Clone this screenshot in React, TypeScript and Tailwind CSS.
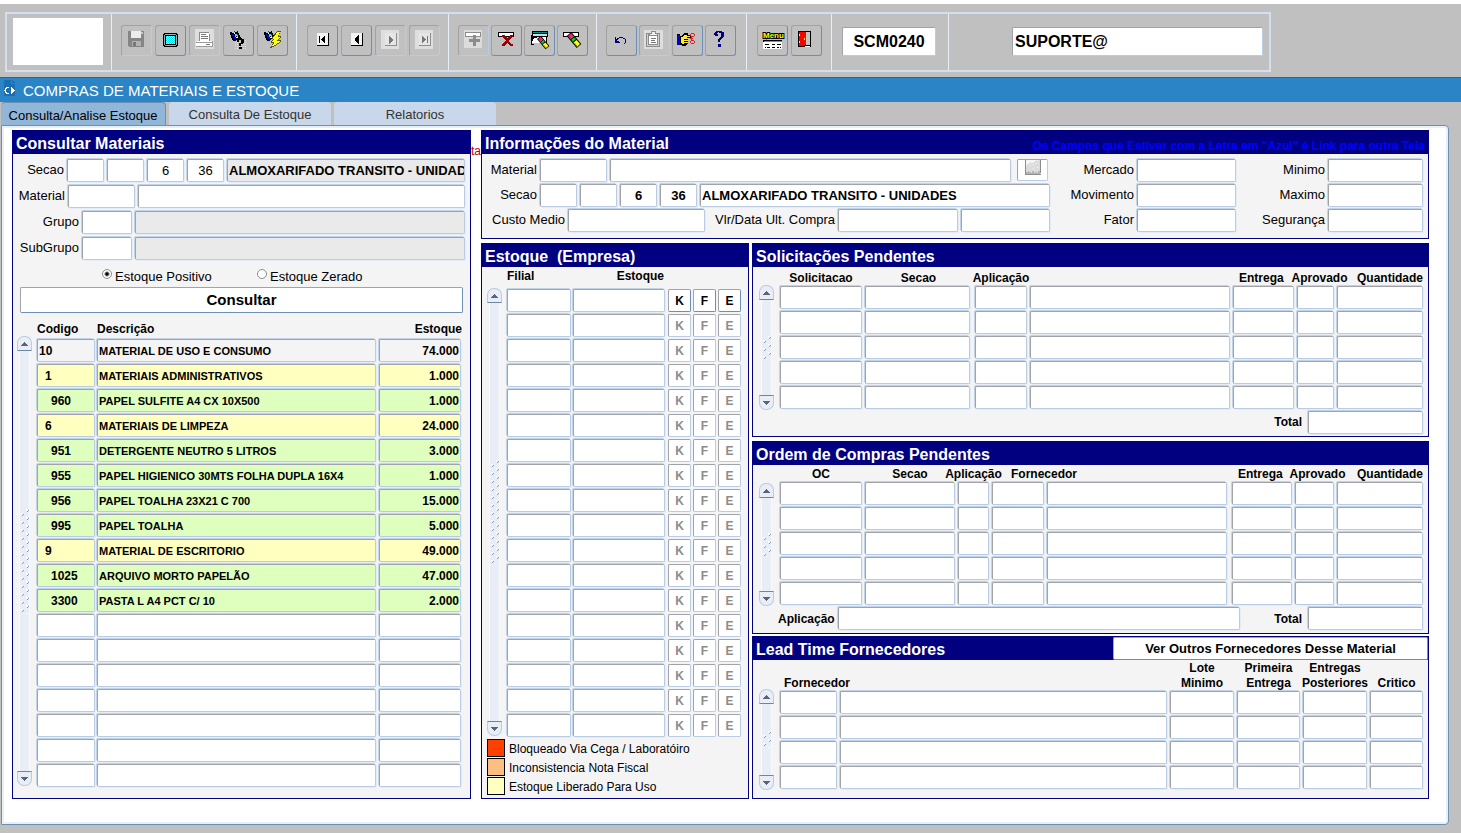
import React, { useState } from 'react';

interface Column {
  label: string;
  width?: string;
  head?: string;
  cell?: string;
}

interface StockRow {
  code: string;
  description: string;
  stock: string;
  level: 0 | 1 | 2;
}

const FIELD =
  'block h-[23px] min-w-0 rounded-[2px] border border-[#b8cce4] border-t-[#a0a4aa] border-l-[#a0a4aa] px-px text-black shadow-[-1px_-1px_0_#c3d3e8,1px_1px_0_#e4ecf6] outline-none';

const TOOL_BUTTON =
  'flex h-[31px] w-[31px] shrink-0 items-center justify-center rounded-[3px] border border-t-[#a2a2a2] border-l-[#a2a2a2]';

const STOCK_ROWS: StockRow[] = [
  { code: '10', description: 'MATERIAL DE USO E CONSUMO', stock: '74.000', level: 0 },
  { code: '1', description: 'MATERIAIS ADMINISTRATIVOS', stock: '1.000', level: 1 },
  { code: '960', description: 'PAPEL SULFITE A4 CX 10X500', stock: '1.000', level: 2 },
  { code: '6', description: 'MATERIAIS DE LIMPEZA', stock: '24.000', level: 1 },
  { code: '951', description: 'DETERGENTE NEUTRO 5 LITROS', stock: '3.000', level: 2 },
  { code: '955', description: 'PAPEL HIGIENICO 30MTS FOLHA DUPLA 16X4', stock: '1.000', level: 2 },
  { code: '956', description: 'PAPEL TOALHA 23X21 C 700', stock: '15.000', level: 2 },
  { code: '995', description: 'PAPEL TOALHA', stock: '5.000', level: 2 },
  { code: '9', description: 'MATERIAL DE ESCRITORIO', stock: '49.000', level: 1 },
  { code: '1025', description: 'ARQUIVO MORTO PAPELÃO', stock: '47.000', level: 2 },
  { code: '3300', description: 'PASTA L A4 PCT C/ 10', stock: '2.000', level: 2 },
];

const LEVEL_BG = ['bg-[#f4f4f4]', 'bg-[#ffffbf]', 'bg-[#dfffbf]'];
const LEVEL_INDENT = ['pl-px', 'pl-[7px]', 'pl-[13px]'];

const SOLICITACOES: Column[] = [
  { label: 'Solicitacao', width: 'w-[85px]', head: 'justify-center' },
  { label: 'Secao', width: 'w-[110px]', head: 'justify-center', cell: 'pr-[5px]' },
  { label: 'Aplicação', width: 'w-[55px]', head: 'justify-center' },
  { label: '' },
  { label: 'Entrega', width: 'w-[64px]', head: 'justify-start pl-[6px]' },
  { label: 'Aprovado', width: 'w-[40px]', head: 'justify-center pl-2' },
  { label: 'Quantidade', width: 'w-[89px]', head: 'justify-end' },
];

const ORDENS: Column[] = [
  { label: 'OC', width: 'w-[85px]', head: 'justify-center' },
  { label: 'Secao', width: 'w-[93px]', head: 'justify-center' },
  { label: 'Aplicação', width: 'w-[34px]', head: 'justify-center' },
  { label: 'Fornecedor', width: 'w-[55px]', head: 'justify-center pl-13' },
  { label: '', cell: 'pr-[5px]' },
  { label: 'Entrega', width: 'w-[63px]', head: 'justify-start pl-[6px]' },
  { label: 'Aprovado', width: 'w-[42px]', head: 'justify-center pl-[6px]' },
  { label: 'Quantidade', width: 'w-[89px]', head: 'justify-end' },
];

const LEAD_TIME: Column[] = [
  { label: 'Fornecedor', width: 'w-[60px]', head: 'justify-start pl-1' },
  { label: '' },
  { label: 'Lote\nMinimo', width: 'w-[67px]', head: 'justify-center' },
  { label: 'Primeira\nEntrega', width: 'w-[66px]', head: 'justify-center' },
  { label: 'Entregas\nPosteriores', width: 'w-[67px]', head: 'justify-center' },
  { label: 'Critico', width: 'w-[56px]', head: 'justify-center' },
];

interface FieldProps extends React.InputHTMLAttributes<HTMLInputElement> {
  name: string;
}

const Field: React.FC<FieldProps> = ({ name, className = '', ...rest }) => (
  <input aria-label={name} id={name} className={`${FIELD} ${className}`} {...rest} />
);

const Label: React.FC<{ htmlFor: string; className: string; children: React.ReactNode }> = ({ htmlFor, className, children }) => (
  <label htmlFor={htmlFor} className={`shrink-0 pr-[3px] text-right text-[13px] leading-[21px] whitespace-nowrap ${className}`}>
    {children}
  </label>
);

const Scroller: React.FC<{ className: string }> = ({ className }) => (
  <div className={`flex w-[15px] shrink-0 flex-col ${className}`}>
    <button aria-label="Subir" className="flex h-[15px] shrink-0 items-center justify-center rounded-t-[7px] border border-[#b8cce4] border-b-[#6b87a8] bg-[#e9edf5]">
      <svg width="7" height="4" viewBox="0 0 7 4" shapeRendering="crispEdges"><path d="M3 0h1v1h1v1h1v1h1v1H0V3h1V2h1V1h1z" fill="#5b6478" /></svg>
    </button>
    <div className="mx-[2px] flex flex-1 flex-col items-center border-x border-[#f9fafc] bg-[#e9edf5]">
      <div className="grow-3 basis-0" />
      <svg className="min-h-0 w-[8px] grow-2 basis-0" shapeRendering="crispEdges">
        <defs>
          <pattern id="grip" width="8" height="8" patternUnits="userSpaceOnUse">
            <path d="M5 0h2v1H6v1H5zM0 4h2v1H1v1H0z" fill="#fff" />
            <path d="M7 1v1H6v1h1V2h1V1zM2 5v1H1v1h1V6h1V5z" fill="#7f9abf" />
          </pattern>
        </defs>
        <rect width="8" height="100%" fill="url(#grip)" />
      </svg>
      <div className="grow-3 basis-0" />
    </div>
    <button aria-label="Descer" className="flex h-[15px] shrink-0 items-center justify-center rounded-b-[7px] border border-[#b8cce4] border-t-[#6b87a8] bg-[#e9edf5]">
      <svg width="7" height="4" viewBox="0 0 7 4" shapeRendering="crispEdges"><path d="M0 0h7v1H6v1H5v1H4v1H3V3H2V2H1V1H0z" fill="#5b6478" /></svg>
    </button>
  </div>
);

const PanelTitle: React.FC<{ children: React.ReactNode }> = ({ children }) => (
  <h2 className="h-[23px] bg-[#000080] pl-[3px] text-[16px] leading-[26px] font-bold whitespace-pre text-white">{children}</h2>
);

const EntryTable: React.FC<{ id: string; columns: Column[]; rows: number; headHeight: string }> = ({ id, columns, rows, headHeight }) => (
  <table className="w-full table-fixed border-collapse">
    <thead>
      <tr>
        {columns.map((col, i) => (
          <th key={i} className={`p-0 align-bottom ${headHeight} ${col.width ?? ''}`}>
            <div className={`flex pr-[3px] text-center text-[12px] leading-[15px] font-bold whitespace-pre ${col.head ?? ''}`}>
              <span>{col.label}</span>
            </div>
          </th>
        ))}
      </tr>
    </thead>
    <tbody>
      {Array.from({ length: rows }, (_, r) => (
        <tr key={r}>
          {columns.map((col, i) => (
            <td key={i} className={`p-0 pb-[2px] ${col.cell ?? 'pr-[3px]'}`}>
              <Field name={`${id}-${r}-${i}`} className="w-full bg-white text-[12px]" />
            </td>
          ))}
        </tr>
      ))}
    </tbody>
  </table>
);

/* Toolbar drawings, all on a 21 by 21 pixel board */

const Icon: React.FC<{ children: React.ReactNode }> = ({ children }) => (
  <svg width="21" height="21" viewBox="0 0 21 21" shapeRendering="crispEdges" className="shrink-0 overflow-visible">
    {children}
  </svg>
);

// one pixel on, one pixel off; odd rows are shifted or left empty
const dots = (x: number, y: number, w: number, h: number, sparse = false) => {
  let d = '';
  for (let row = 0; row < h; row++) {
    if (sparse && row % 2) continue;
    for (let col = row % 2; col < w; col += 2) d += `M${x + col} ${y + row}h1v1h-1z`;
  }
  return d;
};

const Flashlight = () => (
  <>
    <path d="M2 2h2v1h3V2h2V1h1v2h1v2h1v2h1v1h-2v1H9v1H8v1H5v-1H4V8H3V5H2z" fill="#000" />
    <path d="M4 4h2v1h1v2h1v2H6V8H5V6H4z" fill="#0000e0" />
    <path d="M7 4h2v1h1v2H9V6H8v1H7z" fill="#00ffff" />
    <path d="M8 7h2v1H8zM6 3h1v1H6z" fill="#fff" />
    <path d="M6 1h1v1H6z" fill="#e00" />
  </>
);

const Eraser = () => (
  <g shapeRendering="auto">
    <path d="M7 4L17 16" stroke="#000" strokeWidth="6" />
    <path d="M7.500 4.600L9.600 7.100" stroke="#ff1493" strokeWidth="4" />
    <path d="M9.600 7.100L10.200 7.800" stroke="#ff9a20" strokeWidth="4" />
    <path d="M10.700 8.400L12.400 10.500" stroke="#00d020" strokeWidth="4" />
    <path d="M13 11.200L16.500 15.400" stroke="#ffff20" strokeWidth="4" />
    <path d="M12.300 12.800L15.300 16.400" stroke="#8a8a00" strokeWidth="1" />
  </g>
);

const IconSave = () => (
  <Icon>
    <path d="M2 1h16v16H3v-1H2z" fill="#858585" />
    <path d="M5 1h10v7H5z" fill="#ececec" />
    <path d="M15 2h2v2h-2z" fill="#c9c9c9" />
    <path d="M6 11h9v5H6z" fill="#b2b2b2" />
    <path d="M7 12h3v4H7z" fill="#777" />
  </Icon>
);

const IconScreen = () => (
  <Icon>
    <path d="M4 3h13v1h1v12h-1v1H4v-1H3V4h1z" fill="#000" />
    <path d="M5 4h11v1h1v10h-1v1H5v-1H4V5h1z" fill="#a8a8a8" />
    <path d="M5 5h11v10H5z" fill="#000" />
    <path d="M6 6h9v8H6z" fill="#fff" />
    <path d={dots(6, 6, 9, 8)} fill="#00e5ee" />
  </Icon>
);

const IconPrint = () => (
  <Icon>
    <path d="M1 -1h19v20H1z" fill="#dedede" />
    <path d="M5 2h10v2h1v7H5z" fill="#fff" />
    <path d="M5 2h10v1H5zM5 2h1v9H5zM15 4h1v7h-1z" fill="#8a8a8a" />
    <path d="M7 4h5v1H7zM7 6h7v1H7zM7 8h7v1H7z" fill="#777" />
    <path d="M3 11h15v1h1v5H2v-5h1z" fill="#fff" />
    <path d="M2 12h16v1H2zM2 16h17v1H2zM18 11h1v6h-1z" fill="#9a9a9a" />
    <path d="M12 14h4v1h-4z" fill="#777" />
  </Icon>
);

const IconEnterQuery = () => (
  <Icon>
    <Flashlight />
    <path d={dots(7, 12, 12, 8, true)} fill="#ffff00" />
    <path d={dots(15, 10, 4, 2, true)} fill="#ffff00" />
    <path d="M10 8h4v1h2v4h-1v1h-2v2h-2v-3h2v-3h-2v2H9V9h1zM11 17h3v2h-3z" fill="#000" />
  </Icon>
);

const IconExecuteQuery = () => (
  <Icon>
    <Flashlight />
    <path d="M15 1h4v1h-1v2h-1v2h2v2h-1v1h-1v1h2v2h-1v1h-1v1h-2v1h-1v1h-2v1h-2v1H8v-1h1v-1h1v-2h1v-1H9v-2h1v-1h1V9h-1V7h1V6h1V4h1V3h1V2h1z" fill="#55551a" />
    <path d="M15 2h3v1h-1v2h-1v2h2v1h-1v1h-1v1h-1v1h3v1h-1v1h-2v1h-1v1h-2v1h-2v-1h1v-1h1v-2h-2v-1h1v-1h1V9h-1V7h1V6h1V5h1V3h1z" fill="#ffff10" />
  </Icon>
);

const IconNav: React.FC<{ shape: string; off?: boolean }> = ({ shape, off }) => (
  <Icon>
    {off && <path d="M1 0h18v19H1z" fill="#dedede" />}
    <path d="M5 3h12v13H5z" fill={off ? '#8e8e8e' : '#000'} />
    <path d="M5 3h11v12H5z" fill={off ? '#e6e6e6' : '#f3f3f3'} />
    <path d={shape} fill={off ? '#777' : '#000'} />
  </Icon>
);

const IconInsert = () => (
  <Icon>
    <path d="M1 0h18v18H1z" fill="#dcdcdc" />
    <path d="M2 2h16v5H2z" fill="#8c8c8c" />
    <path d="M3 3h14v3H3z" fill="#fff" />
    <path d="M10 5h3v4h4v3h-4v4h-3v-4H6V9h4z" fill="#8c8c8c" />
  </Icon>
);

const IconDelete = () => (
  <Icon>
    <path d="M2 2h16v5H2z" fill="#000" />
    <path d="M3 3h14v3H3z" fill="#fff" />
    <path d="M6 5h3v1h1v1h1v1h1V7h1V6h1V5h3v2h-1v1h-1v1h-1v1h-1v2h1v1h1v1h2v2h-3v-1h-1v-1h-1v-1h-1v1h-1v1H9v1H6v-2h1v-1h1v-1h1v-1h1v-1H9V9H8V8H7V7H6z" fill="#990000" />
  </Icon>
);

const IconClearBlock = () => (
  <Icon>
    <path d="M3 1h16v6H3zM2 5h1v9h2v1H2zM17 6h1v7h-1z" fill="#000" />
    <path d="M4 2h14v1H4z" fill="#008a8a" />
    <path d="M4 4h14v2H4z" fill="#d8d8d8" />
    <path d="M3 7h14v6H3z" fill="#fff" />
    <path d="M3 7h5v1H5v1H4v2H3z" fill="#000" />
    <g transform="translate(4 4) scale(.85)">
      <Eraser />
    </g>
  </Icon>
);

const IconClearRecord = () => (
  <Icon>
    <path d="M1 2h16v5H1z" fill="#000" />
    <path d="M2 3h14v3H2z" fill="#fff" />
    <Eraser />
  </Icon>
);

const IconUndo = () => (
  <Icon>
    <path d="M4 7h1v2h1V8h2V7h4v1h2v1h1v4h-1v1h-1v-1h1V9h-2V8H8v1H7v1H6v1h2v1h1v1H4z" fill="#000080" />
  </Icon>
);

const IconClipboard = () => (
  <Icon>
    <path d="M0 0h19v19H0z" fill="#dedede" />
    <path d="M2 3h14v14H2z" fill="#8c8c8c" />
    <path d="M3 4h12v12H3z" fill="#d0d0d0" />
    <path d="M4 4h10v11H4z" fill="#8c8c8c" />
    <path d="M5 5h8v9H5z" fill="#fff" />
    <path d="M5 3h2V1h5v2h2v3H5z" fill="#8c8c8c" />
    <path d="M8 2h3v2h2v1H6V4h2z" fill="#eee" />
    <path d="M7 8h5v1H7zM7 10h4v1H7zM7 12h5v1H7z" fill="#777" />
  </Icon>
);

const IconHand = () => (
  <Icon>
    <path d="M0 5h3v10H0z" fill="#0000d8" />
    <path d="M0 4h3v1H0zM3 6h2V5h1V4h1V3h4v2h3v3h-3v6h-1v1h-1v1H5v-1H3z" fill="#000" />
    <path d="M4 7h2V6h1V5h3v1h3v1h-3v1h1v1h-1v1h1v1h-1v1h1v1h-1v1H5v-1H4z" fill="#ffe92e" />
    <path d="M7 9h3v1H7zM7 11h3v1H7zM7 13h3v1H7z" fill="#000" />
    <path d="M14 3h3v1h-3zM13 4h1v2h-1zM17 4h1v2h-1zM14 6h3v1h-3zM14 7h1v1h1v1h-1v1h-1V9h-1V8h1zM14 10h3v1h-3zM13 11h1v2h-1zM17 11h1v2h-1zM14 13h3v1h-3z" fill="#e02020" />
  </Icon>
);

const IconHelp = () => (
  <Icon>
    <path d="M6 1h6v1h2v5h-1v1h-1v1h-1v1h-1v2H8V9h1V8h1V7h1V3H9V2H8v1H7v1h1v2H5V5H4V3h1V2h1zM8 14h3v3H8z" fill="#000080" />
  </Icon>
);

const IconMenu = () => (
  <Icon>
    <path d="M1 10h19v2H1z" fill="#000" />
    <path d="M2 11h18v1H2z" fill="#00c8c8" />
    <path d="M1 12h19v7H1z" fill="#fff" />
    <path d="M3 14h4v1H3zM3 17h1v1H3zM5 17h3v1H5zM10 14h3v1h-3zM10 17h3v1h-3zM15 14h4v1h-4zM15 17h2v1h-2zM18 17h1v1h-1z" fill="#000" />
    <text x="1" y="8" fontSize="8" fontWeight="bold" fontFamily="Liberation Sans" fill="#ffff00" stroke="#000" strokeWidth="2" paintOrder="stroke" shapeRendering="auto">Menu</text>
  </Icon>
);

const IconExit = () => (
  <Icon>
    <path d="M2 1h13v16H2z" fill="#000" />
    <path d="M10 2h4v13h-4z" fill="#c4c4c4" />
    <path d="M3 2h7v13H8v1H3z" fill="#ff0000" />
    <path d="M3 4h1v2H3zM3 11h1v2H3zM8 8h1v2H8z" fill="#ffff00" />
    <path d="M9 16h5v1H9z" fill="#fff" />
  </Icon>
);

const IconForm = () => (
  <svg width="14" height="16" viewBox="0 0 14 16" shapeRendering="crispEdges" className="-mt-1">
    <path d="M1 0h7v4h4v12H1z" fill="#1a6fb3" />
    <path d="M9 0h1v1h1v1h1v1H9z" fill="#1a6fb3" />
    <path d="M3 7h3v1H4v1H3v3h1v1h2v1H3v-1H2v-2H1v-1h1V8h1zM8 7h1v1h1v1h1v1h1v1h-1v1h-1v1H9v1H8z" fill="#fff" />
  </svg>
);

const NAV_FIRST = 'M7 6h1v7H7zM13 6v7h-1v-1h-1v-1h-1v-1H9V9h1V8h1V7h1V6z';
const NAV_PREV = 'M13 5v9h-1v-1h-1v-1h-1v-1H9V8h1V7h1V6h1V5z';
const NAV_NEXT = 'M9 6h1v1h1v1h1v1h1v2h-1v1h-1v1h-1v1H9z';
const NAV_LAST = 'M8 6h1v1h1v1h1v1h1v1h-1v1h-1v1H9v1H8zM13 6h1v7h-1z';

interface Tool {
  name: string;
  icon: React.ReactNode;
  off?: boolean;
}

const TOOL_GROUPS: { box: string; tools: Tool[] }[] = [
  {
    box: 'w-[185px] gap-[3px] pl-[9px]',
    tools: [
      { name: 'Salvar', icon: <IconSave />, off: true },
      { name: 'Tela', icon: <IconScreen /> },
      { name: 'Imprimir', icon: <IconPrint />, off: true },
      { name: 'Entrar consulta', icon: <IconEnterQuery /> },
      { name: 'Executar consulta', icon: <IconExecuteQuery /> },
    ],
  },
  {
    box: 'w-[152px] gap-[3px] pl-[10px]',
    tools: [
      { name: 'Primeiro', icon: <IconNav shape={NAV_FIRST} /> },
      { name: 'Anterior', icon: <IconNav shape={NAV_PREV} /> },
      { name: 'Proximo', icon: <IconNav shape={NAV_NEXT} off />, off: true },
      { name: 'Ultimo', icon: <IconNav shape={NAV_LAST} off />, off: true },
    ],
  },
  {
    box: 'w-[148px] gap-[2px] pl-[9px]',
    tools: [
      { name: 'Inserir', icon: <IconInsert />, off: true },
      { name: 'Excluir', icon: <IconDelete /> },
      { name: 'Limpar bloco', icon: <IconClearBlock /> },
      { name: 'Limpar registro', icon: <IconClearRecord /> },
    ],
  },
  {
    box: 'w-[150px] gap-[2px] pl-[9px]',
    tools: [
      { name: 'Desfazer', icon: <IconUndo /> },
      { name: 'Colar', icon: <IconClipboard />, off: true },
      { name: 'Lista', icon: <IconHand /> },
      { name: 'Ajuda', icon: <IconHelp /> },
    ],
  },
  {
    box: 'w-[85px] gap-[3px] pl-[10px]',
    tools: [
      { name: 'Menu', icon: <IconMenu /> },
      { name: 'Sair', icon: <IconExit /> },
    ],
  },
];

const Toolbar = () => (
  <header className="border-t-4 border-white pt-2 pb-[5px] pl-[5px]">
    <div className="flex h-[60px] w-fit border-2 border-[#d3dfee]">
      <div className="w-[105px] border-r border-[#e6eef8] px-[6px] py-1">
        <div className="h-[47px] w-[90px] bg-white" />
      </div>
      {TOOL_GROUPS.map((group, i) => (
        <div key={i} className={`flex items-start border-r border-[#e6eef8] pt-[11px] ${group.box}`}>
          {group.tools.map((tool) => (
            <button
              key={tool.name}
              aria-label={tool.name}
              disabled={tool.off}
              className={`${TOOL_BUTTON} ${tool.off ? 'border-r-[#b8cce4] border-b-[#b8cce4]' : 'border-r-[#6b8fb5] border-b-[#6b8fb5]'}`}
            >
              {tool.icon}
            </button>
          ))}
        </div>
      ))}
      <div className="w-[117px] border-r border-[#e6eef8] pt-[13px] pl-[10px]">
        <input
          aria-label="Programa"
          defaultValue="SCM0240"
          className="block h-[29px] w-[94px] rounded-[2px] border border-[#b8cce4] border-t-[#a0a4aa] border-l-[#a0a4aa] bg-white text-center text-[16px] font-bold outline-none"
        />
      </div>
      <div className="w-[320px] pt-[13px] pl-[63px]">
        <input
          aria-label="Usuario"
          defaultValue="SUPORTE@"
          className="block h-[29px] w-[251px] rounded-[2px] border border-[#b8cce4] border-t-[#a0a4aa] border-l-[#a0a4aa] bg-white pl-[2px] text-[16px] font-bold outline-none"
        />
      </div>
    </div>
  </header>
);

const ConsultarMateriais = () => {
  const [filter, setFilter] = useState('positivo');
  const blanks = Array.from({ length: 18 - STOCK_ROWS.length }, () => null);

  return (
    <section className="w-[459px] shrink-0 border border-[#000080] bg-[#f4f4f4]">
      <PanelTitle>Consultar Materiais</PanelTitle>
      <div className="flex flex-col gap-[3px] pt-[5px] pr-[5px]">
        <div className="flex gap-[3px]">
          <Label htmlFor="sec-1" className="-mr-[3px] w-[54px]">Secao</Label>
          <Field name="sec-1" className="w-[37px] bg-white" />
          <Field name="sec-2" className="w-[37px] bg-white" />
          <Field name="sec-3" defaultValue="6" className="w-[37px] bg-white text-center text-[13px]" />
          <Field name="sec-4" defaultValue="36" className="w-[37px] bg-white text-center text-[13px]" />
          <Field name="sec-nome" readOnly defaultValue="ALMOXARIFADO TRANSITO - UNIDADES" className="flex-1 bg-[#eaeaea] pr-0 text-[13px] font-bold" />
        </div>
        <div className="flex gap-[3px]">
          <Label htmlFor="material" className="-mr-[3px] w-[55px]">Material</Label>
          <Field name="material" className="w-[67px] bg-white" />
          <Field name="material-nome" className="flex-1 bg-white" />
        </div>
        <div className="flex gap-[3px]">
          <Label htmlFor="grupo" className="-mr-[3px] w-[69px]">Grupo</Label>
          <Field name="grupo" className="w-[50px] bg-white" />
          <Field name="grupo-nome" readOnly className="flex-1 bg-[#eaeaea]" />
        </div>
        <div className="flex gap-[3px]">
          <Label htmlFor="subgrupo" className="-mr-[3px] w-[69px]">SubGrupo</Label>
          <Field name="subgrupo" className="w-[50px] bg-white" />
          <Field name="subgrupo-nome" readOnly className="flex-1 bg-[#eaeaea]" />
        </div>
      </div>
      <div className="mt-2 flex h-4 pl-[89px] text-[13px] leading-[17px]">
        {[
          { id: 'positivo', label: 'Estoque Positivo' },
          { id: 'zerado', label: 'Estoque Zerado' },
        ].map((option) => (
          <label key={option.id} className="flex w-[155px] gap-[3px]">
            <input
              type="radio"
              name="estoque"
              checked={filter === option.id}
              onChange={() => setFilter(option.id)}
              className="mt-px h-[10px] w-[10px] appearance-none rounded-full border border-[#8c8c8c] bg-white checked:bg-[radial-gradient(circle,#000_0_1px,#fff_3px)]"
            />
            {option.label}
          </label>
        ))}
      </div>
      <button className="mx-[7px] mt-[3px] block h-[26px] w-[443px] rounded-[2px] border border-[#6b8fb5] border-t-[#a0a4aa] border-l-[#a0a4aa] bg-white text-[15px] font-bold">
        Consultar
      </button>
      <div className="mt-2 flex gap-[5px] pr-[6px] pb-[9px] pl-1">
        <Scroller className="mt-[15px] mb-[3px]" />
        <table className="w-full table-fixed border-collapse text-[12px] font-bold">
          <thead>
            <tr className="text-left leading-4">
              <th className="h-[18px] w-[60px] p-0 align-top">Codigo</th>
              <th className="p-0 align-top">Descrição</th>
              <th className="w-[85px] p-0 pr-[2px] text-right align-top">Estoque</th>
            </tr>
          </thead>
          <tbody>
            {[...STOCK_ROWS, ...blanks].map((row, i) => {
              const bg = row ? LEVEL_BG[row.level] : 'bg-white';
              return (
                <tr key={i}>
                  <td className="p-0 pr-[2px] pb-[2px]">
                    <div className={`${FIELD} ${bg} leading-[22px] ${row ? LEVEL_INDENT[row.level] : ''}`}>{row?.code}</div>
                  </td>
                  <td className="p-0 pr-[3px] pb-[2px]">
                    <div className={`${FIELD} ${bg} text-[11px] leading-[22px] whitespace-nowrap`}>{row?.description}</div>
                  </td>
                  <td className="p-0 pr-[3px] pb-[2px]">
                    <div className={`${FIELD} ${bg} text-right leading-[22px]`}>{row?.stock}</div>
                  </td>
                </tr>
              );
            })}
          </tbody>
        </table>
      </div>
    </section>
  );
};

const InformacoesMaterial = () => (
  <section className="border border-[#000080] bg-[#f4f4f4]">
    <div className="flex justify-between bg-[#000080]">
      <PanelTitle>Informações do Material</PanelTitle>
      <p className="h-[23px] pr-[3px] text-[12px] leading-[31px] font-bold text-[#0000ff]">
        Os Campos que Estiver com a Letra em "Azul" é Link para outra Tela
      </p>
    </div>
    <div className="flex pt-[5px] pr-[5px] pb-[6px]">
      <div className="flex min-w-0 flex-1 flex-col gap-[2px]">
        <div className="flex gap-[3px]">
          <Label htmlFor="info-material" className="-mr-[3px] w-[58px]">Material</Label>
          <Field name="info-material" className="w-[67px] bg-white" />
          <Field name="info-material-nome" className="flex-1 bg-white" />
          <button aria-label="Imagem" className="mr-[2px] ml-[3px] flex h-[22px] w-[31px] justify-center rounded-[2px] border border-[#b8cce4] border-t-[#a0a4aa] border-l-[#a0a4aa] bg-white">
            <svg width="16" height="15" viewBox="0 0 16 15" shapeRendering="crispEdges">
              <path d="M0 0h16v15H0z" fill="#f6f6f6" />
              <path d="M0 6h1V5h1V4h2V3h1V2h1v1h2V2h2V1h1V0h1v1h1V0h3v15H0z" fill="#dcdcdc" />
              <path d="M1 14v-2h2v-1h1v1h2v1h1v-2h2v2h1v-1h2v1h1v-2h2v3z" fill="#b4b4b4" />
              <path d="M0 0h1v14h15v1H0zM15 0h1v13h-1z" fill="#8c8c8c" />
              <path d="M5 5h1v1H5zM8 4h1v1H8zM11 3h1v1h-1zM8 8h1v1H8zM12 7h1v1h-1z" fill="#f6f6f6" />
            </svg>
          </button>
        </div>
        <div className="flex gap-[3px]">
          <Label htmlFor="info-sec-1" className="-mr-[3px] w-[58px]">Secao</Label>
          <Field name="info-sec-1" className="w-[37px] bg-white" />
          <Field name="info-sec-2" className="w-[37px] bg-white" />
          <Field name="info-sec-3" defaultValue="6" className="w-[37px] bg-white text-center text-[13px] font-bold" />
          <Field name="info-sec-4" defaultValue="36" className="w-[37px] bg-white text-center text-[13px] font-bold" />
          <Field name="info-sec-nome" defaultValue="ALMOXARIFADO TRANSITO - UNIDADES" className="flex-1 bg-white text-[13px] font-bold" />
        </div>
        <div className="flex">
          <Label htmlFor="custo" className="w-[86px]">Custo Medio</Label>
          <Field name="custo" className="w-[137px] bg-white" />
          <Label htmlFor="compra-valor" className="w-[133px]">Vlr/Data Ult. Compra</Label>
          <Field name="compra-valor" className="mr-[3px] w-[120px] bg-white" />
          <Field name="compra-data" className="flex-1 bg-white" />
        </div>
      </div>
      <div className="flex flex-col gap-[2px]">
        {[
          ['Mercado', 'Minimo'],
          ['Movimento', 'Maximo'],
          ['Fator', 'Segurança'],
        ].map(([first, second]) => (
          <div key={first} className="flex">
            <Label htmlFor={first} className="w-[87px]">{first}</Label>
            <Field name={first} className="w-[99px] bg-white" />
            <Label htmlFor={second} className="w-[92px]">{second}</Label>
            <Field name={second} className="w-[95px] bg-white" />
          </div>
        ))}
      </div>
    </div>
  </section>
);

const EstoqueEmpresa = () => (
  <section className="w-[268px] shrink-0 border border-[#000080] bg-[#f4f4f4]">
    <PanelTitle>Estoque  (Empresa)</PanelTitle>
    <div className="flex gap-[5px] pr-[5px] pl-[5px]">
      <Scroller className="mt-[21px] mb-[3px]" />
      <table className="w-full table-fixed border-collapse text-[12px]">
        <thead>
          <tr className="leading-[14px]">
            <th className="h-[22px] w-[66px] p-0 pt-[2px] text-left align-top">Filial</th>
            <th className="w-[95px] p-0 pt-[2px] pr-1 text-right align-top">Estoque</th>
            <th colSpan={3} />
          </tr>
        </thead>
        <tbody>
          {Array.from({ length: 18 }, (_, r) => (
            <tr key={r}>
              <td className="p-0 pr-[2px] pb-[2px]"><Field name={`filial-${r}`} className="w-full bg-white" /></td>
              <td className="p-0 pr-[3px] pb-[2px]"><Field name={`estoque-${r}`} className="w-full bg-white" /></td>
              {['K', 'F', 'E'].map((key) => (
                <td key={key} className="p-0 pr-[2px] pb-[2px]">
                  <button
                    disabled={r > 0}
                    className="block h-[23px] w-full rounded-[2px] border border-[#6b8fb5] border-t-[#a0a4aa] border-l-[#a0a4aa] bg-white font-bold disabled:border-r-[#b8cce4] disabled:border-b-[#b8cce4] disabled:text-[#8c8c8c]"
                  >
                    {key}
                  </button>
                </td>
              ))}
            </tr>
          ))}
        </tbody>
      </table>
    </div>
    <ul className="flex flex-col gap-px pb-[3px] pl-[5px] text-[12px] leading-[20px]">
      <li className="flex h-[18px] gap-1"><span className="w-[18px] border border-black bg-[#ff4000]" />Bloqueado Via Cega / Laboratóiro</li>
      <li className="flex h-[18px] gap-1"><span className="w-[18px] border border-black bg-[#ffbf80]" />Inconsistencia Nota Fiscal</li>
      <li className="flex h-[18px] gap-1"><span className="w-[18px] border border-black bg-[#ffffbf]" />Estoque Liberado Para Uso</li>
    </ul>
  </section>
);

const Pendencias = () => (
  <div className="flex min-w-0 flex-1 flex-col">
    <section className="border border-[#000080] bg-[#f4f4f4] pb-[2px]">
      <PanelTitle>Solicitações Pendentes</PanelTitle>
      <div className="flex gap-[6px] pr-[2px] pl-[6px]">
        <Scroller className="mt-[18px] mb-px" />
        <EntryTable id="sol" columns={SOLICITACOES} rows={5} headHeight="h-[19px]" />
      </div>
      <div className="flex h-[23px] justify-end pr-[5px] text-[12px] leading-[23px] font-bold">
        <label htmlFor="sol-total" className="pr-[6px]">Total</label>
        <Field name="sol-total" className="w-[115px] bg-white" />
      </div>
    </section>

    <section className="mt-1 border border-[#000080] bg-[#f4f4f4] pb-[3px]">
      <PanelTitle>Ordem de Compras Pendentes</PanelTitle>
      <div className="flex gap-[6px] pr-[2px] pl-[6px]">
        <Scroller className="mt-[18px] mb-px" />
        <EntryTable id="oc" columns={ORDENS} rows={5} headHeight="h-[17px]" />
      </div>
      <div className="flex h-[23px] pr-[5px] pl-[25px] text-[12px] leading-[25px] font-bold">
        <label htmlFor="oc-aplicacao" className="w-[60px]">Aplicação</label>
        <Field name="oc-aplicacao" className="flex-1 bg-white" />
        <label htmlFor="oc-total" className="w-[68px] pr-[6px] text-right">Total</label>
        <Field name="oc-total" className="w-[115px] bg-white" />
      </div>
    </section>

    <section className="mt-[2px] flex-1 border border-[#000080] bg-[#f4f4f4]">
      <div className="flex justify-between bg-[#000080]">
        <PanelTitle>Lead Time Fornecedores</PanelTitle>
        <button className="h-[23px] w-[315px] rounded-[2px] border border-[#6b8fb5] border-t-[#a0a4aa] border-l-[#a0a4aa] bg-white text-[13px] font-bold">
          Ver Outros Fornecedores Desse Material
        </button>
      </div>
      <div className="flex gap-[6px] pr-[2px] pl-[6px]">
        <Scroller className="mt-[29px] mb-px" />
        <EntryTable id="lead" columns={LEAD_TIME} rows={4} headHeight="h-[31px]" />
      </div>
    </section>
  </div>
);

const TABS = ['Consulta/Analise Estoque', 'Consulta De Estoque', 'Relatorios'];

const App: React.FC = () => {
  const [tab, setTab] = useState(TABS[0]);

  return (
    <div className="min-h-screen bg-[#c0c0c0] font-['Liberation_Sans',Arial,sans-serif] text-black">
      <Toolbar />
      <div className="flex h-[25px] items-center gap-[6px] border-t border-[#3d5f80] bg-[#2b84c5] pl-[3px] text-white">
        <IconForm />
        <h1 className="text-[15px] leading-[25px]">COMPRAS DE MATERIAIS E ESTOQUE</h1>
      </div>
      <nav className="flex gap-[3px] pl-px">
        {TABS.map((name) => (
          <button
            key={name}
            onClick={() => setTab(name)}
            className={`h-[23px] rounded-t-[4px] pt-[3px] text-[13px] ${
              tab === name ? 'w-[165px] border-t border-r border-[#6b8fb5] bg-[#92b6d8] text-black' : 'w-[162px] bg-[#c9d7ea] text-[#333]'
            }`}
          >
            {name}
          </button>
        ))}
      </nav>
      <main className="mr-3 ml-px rounded-r-[4px] border border-[#6b8fb5] bg-[#e9eff7] p-[2px]">
        <div className="flex bg-white pt-[2px] pr-[17px] pb-[23px] pl-2">
          <ConsultarMateriais />
          <div className="w-[10px] shrink-0 pt-[13px] text-[12px] leading-4 text-[#c00000]">ta</div>
          <div className="flex min-w-0 flex-1 flex-col gap-1">
            <InformacoesMaterial />
            <div className="flex flex-1 gap-[3px]">
              <EstoqueEmpresa />
              <Pendencias />
            </div>
          </div>
        </div>
      </main>
    </div>
  );
};

export default App;
